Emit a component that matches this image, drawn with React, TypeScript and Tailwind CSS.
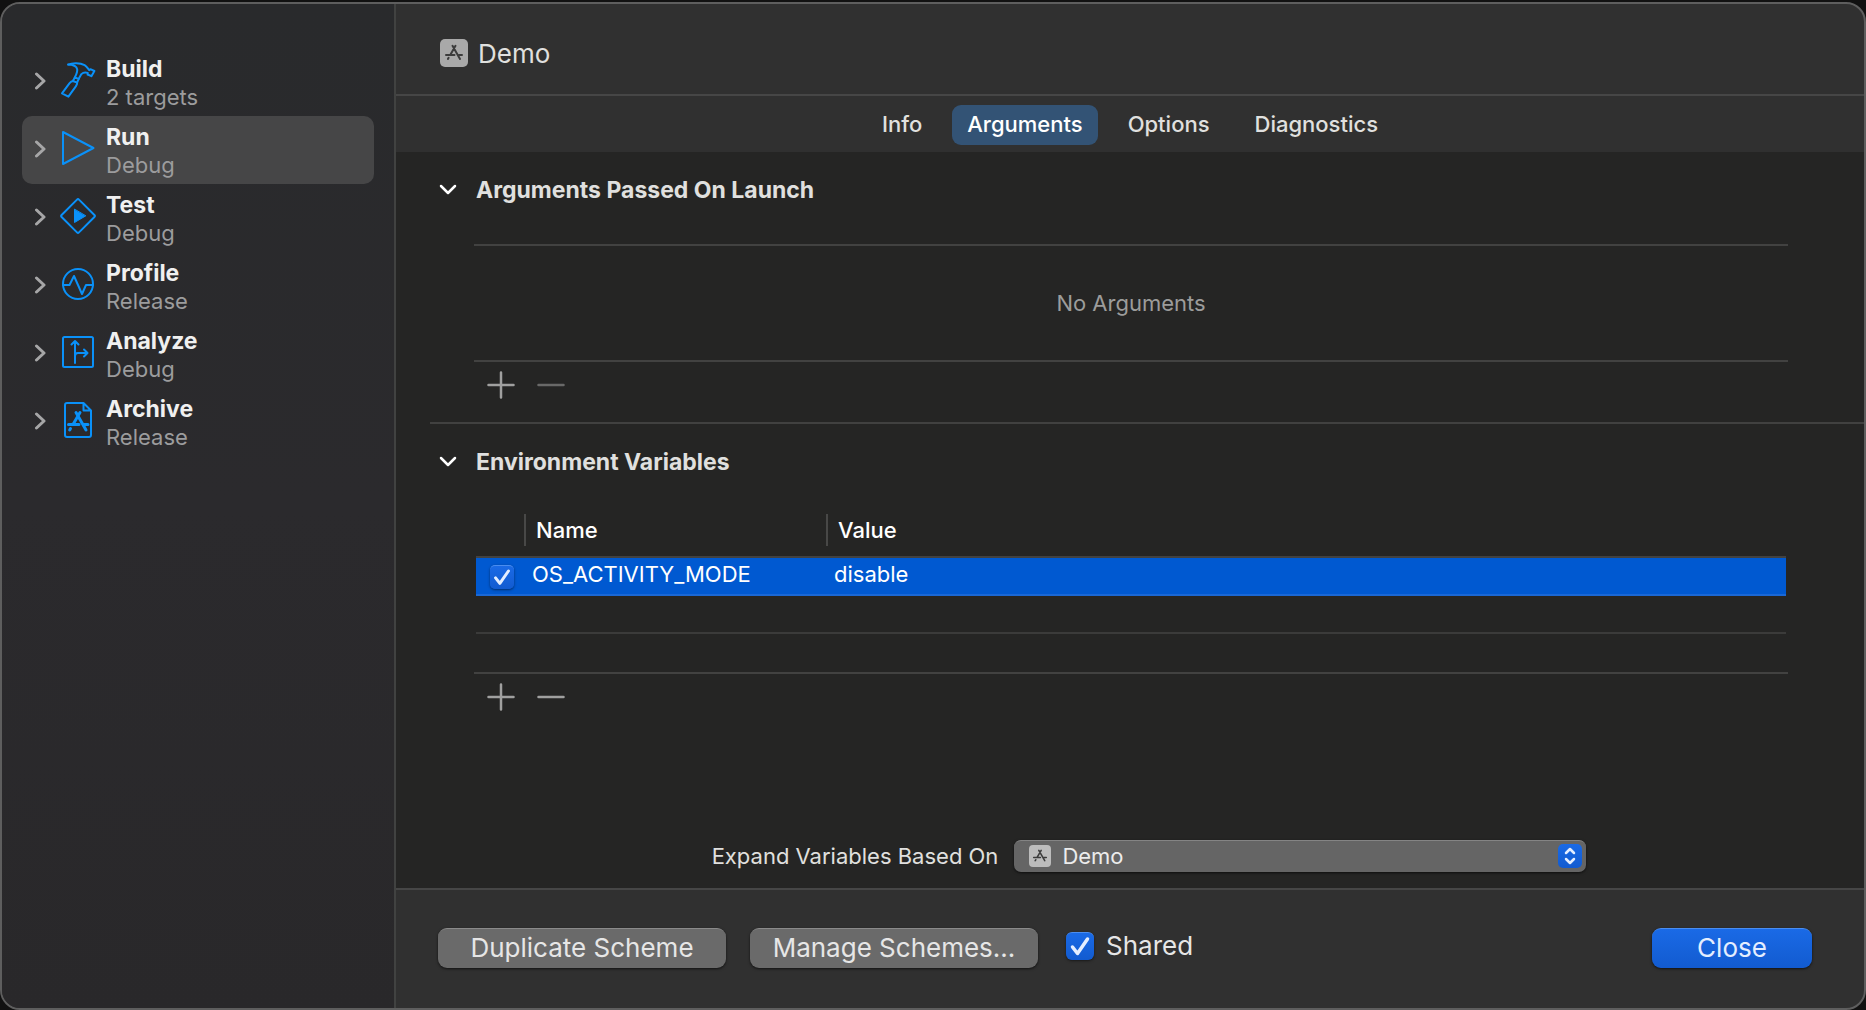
import { useState, type ReactNode } from "react";

const schemes = [
  { name: "Build", detail: "2 targets", icon: <HammerIcon /> },
  { name: "Run", detail: "Debug", icon: <RunIcon /> },
  { name: "Test", detail: "Debug", icon: <TestIcon /> },
  { name: "Profile", detail: "Release", icon: <ProfileIcon /> },
  { name: "Analyze", detail: "Debug", icon: <AnalyzeIcon /> },
  { name: "Archive", detail: "Release", icon: <ArchiveIcon /> },
];

const tabs = ["Info", "Arguments", "Options", "Diagnostics"];

function IconFrame({ children }: { children: ReactNode }) {
  return (
    <svg
      viewBox="0 0 36 36"
      fill="none"
      stroke="currentColor"
      strokeWidth="2"
      strokeLinecap="round"
      strokeLinejoin="round"
      className="mb-1 size-9 shrink-0 text-[#0a91f9]"
      aria-hidden="true"
    >
      {children}
    </svg>
  );
}

function HammerIcon() {
  return (
    <IconFrame>
      <path d="M8 2.6C12.5.6 20 .6 24.6 3.2c2.2 1.3 3.4 3.6 4.6 4.9l1.2-.9 4 1.8-3 5.2-3.8-1.7.2-1.6c-2.4-.9-4.8-.4-6.4 1.2L18.6 17M8 2.6c4.6.2 8.6 1.3 9.2 4.8.4 2.8-1.2 5.6-2.4 8" />
      <path d="M14.8 15.4l3.8 1.6-1.4 3.4c.2 1.4-.4 2.4-1.2 3.8L8.4 34.6 2 31.4l7.6-10.2c1-1.2 1.8-2 3.2-2.2zM12.8 19l4.4 1.6" />
    </IconFrame>
  );
}

function RunIcon() {
  return (
    <IconFrame>
      <path d="M3 2v32L33.5 18z" />
    </IconFrame>
  );
}

function TestIcon() {
  return (
    <IconFrame>
      <path d="M17 1.6q1-1 2 0l15.4 15.4q1 1 0 2L19 34.4q-1 1-2 0L1.6 19q-1-1 0-2z" />
      <path d="M14.5 11.5v13l11-6.5z" fill="currentColor" strokeWidth="1" />
    </IconFrame>
  );
}

function ProfileIcon() {
  return (
    <IconFrame>
      <circle cx="18" cy="18" r="15" />
      <path d="M3 19h6.5l4.5-9 8 18 4-9H33" />
    </IconFrame>
  );
}

function AnalyzeIcon() {
  return (
    <IconFrame>
      <rect x="3" y="3" width="30" height="30" rx="1.5" />
      <path d="M15 29V8M11.5 10.5L15 7l3.5 3.5M15 22q0-3 3-3h9M24 15.5l3.5 3.5-3.5 3.5" />
    </IconFrame>
  );
}

function ArchiveIcon() {
  return (
    <IconFrame>
      <path d="M7 1h16.5L31 8.5V33q0 2-2 2H7q-2 0-2-2V3q0-2 2-2zM23.5 1v7.5H31" />
      <path
        d="M20 10.500l-7 12M10.500 26.500l-.8 1.400M16 10.500l10 17.400M8.500 22.500h10.500M24 22.500h4"
        strokeWidth="3"
      />
    </IconFrame>
  );
}

function AppIcon({ className }: { className: string }) {
  return (
    <svg viewBox="0 0 28 28" fill="currentColor" className={className} aria-hidden="true">
      <rect width="28" height="28" rx="5" />
      <path
        d="M15.5 6.800L10.500 15.500M8.600 18.800l-.7 1.200M12.500 6.800L20 20M6 16h8.500M19 16h3"
        fill="none"
        stroke="#3c3c3c"
        strokeWidth="2"
        strokeLinecap="round"
      />
    </svg>
  );
}

function Disclosure({ open }: { open?: boolean }) {
  return open ? (
    <svg viewBox="0 0 18 12" className="h-3 w-[18px] shrink-0" aria-hidden="true">
      <path d="M2 2l7 7 7-7" fill="none" stroke="#fff" strokeWidth="2.5" strokeLinecap="round" strokeLinejoin="round" />
    </svg>
  ) : (
    <svg viewBox="0 0 12 18" className="mb-0.5 h-[18px] w-3 shrink-0" aria-hidden="true">
      <path d="M2.5 2l7.500 7-7.500 7" fill="none" stroke="#a6a6a7" strokeWidth="3" strokeLinecap="round" strokeLinejoin="round" />
    </svg>
  );
}

function Checkbox({ id, label, className }: { id: string; label?: string; className: string }) {
  return (
    <span className="relative inline-flex shrink-0">
      <input
        id={id}
        type="checkbox"
        defaultChecked
        aria-label={label}
        className={`peer appearance-none border-t border-[#4a8df0] bg-linear-to-b from-[#1a6ae6] to-[#125bd0] shadow-sm shadow-black/40 ${className}`}
      />
      <svg
        viewBox="0 0 28 28"
        className="pointer-events-none absolute inset-0 hidden size-full peer-checked:block"
        aria-hidden="true"
      >
        <path d="M6.5 15l5 6.500L21.500 7" fill="none" stroke="#e4eeff" strokeWidth="3.5" strokeLinecap="round" strokeLinejoin="round" />
      </svg>
    </span>
  );
}

function AddRemove({ canRemove }: { canRemove: boolean }) {
  return (
    <div className="flex h-[46px] items-center gap-[22px] pl-[13px] text-[#a0a09f]">
      <button type="button" aria-label="Add">
        <svg viewBox="0 0 28 28" className="size-7" aria-hidden="true">
          <path d="M14 1.5v25M1.5 14h25" stroke="currentColor" strokeWidth="2.5" strokeLinecap="round" />
        </svg>
      </button>
      <button type="button" aria-label="Remove" disabled={!canRemove} className="disabled:text-[#696968]">
        <svg viewBox="0 0 28 28" className="size-7" aria-hidden="true">
          <path d="M1.5 14h25" stroke="currentColor" strokeWidth="2.5" strokeLinecap="round" />
        </svg>
      </button>
    </div>
  );
}

function SectionTitle({ children }: { children: ReactNode }) {
  return (
    <h2 className="pl-[9px]">
      <button type="button" className="flex items-center gap-[19px] text-[23px] leading-7 font-bold text-[#e0e0df]">
        <Disclosure open />
        {children}
      </button>
    </h2>
  );
}

function Sidebar({ selected, onSelect }: { selected: string; onSelect: (name: string) => void }) {
  return (
    <nav className="w-[394px] shrink-0 border-r-2 border-[#414241] bg-linear-to-b from-[#292a2c] via-[#2b2a2d] to-[#29282a] px-5 pt-11">
      <ul>
        {schemes.map((s) => (
          <li key={s.name}>
            <button
              type="button"
              onClick={() => onSelect(s.name)}
              className={`flex h-[68px] w-full items-center rounded-[10px] pl-3 text-left ${
                s.name === selected ? "bg-[#464647]" : ""
              }`}
            >
              <Disclosure />
              <span className="ml-[14px]">{s.icon}</span>
              <span className="ml-[10px] flex flex-col pt-0.5">
                <span className="text-[23px] leading-7 font-bold text-[#f0f0f0]">{s.name}</span>
                <span className="text-[22px] leading-7 text-[#9c9c9d]">{s.detail}</span>
              </span>
            </button>
          </li>
        ))}
      </ul>
    </nav>
  );
}

function EnvironmentTable() {
  return (
    <div className="mt-7 border-b-2 border-[#424241] px-0.5">
      <table className="w-full table-fixed border-separate border-spacing-0 text-left text-[22px] leading-7 text-white">
        <colgroup>
          <col className="w-12" />
          <col className="w-[302px]" />
          <col />
        </colgroup>
        <thead>
          <tr className="h-[54px]">
            <th className="border-b-2 border-[#424241] p-0" aria-label="Enabled" />
            <th className="border-b-2 border-[#424241] p-0 font-medium">
              <span className="flex h-8 items-center border-l-2 border-[#484847] pl-[10px]">Name</span>
            </th>
            <th className="border-b-2 border-[#424241] p-0 font-medium">
              <span className="flex h-8 items-center border-l-2 border-[#484847] pl-[10px]">Value</span>
            </th>
          </tr>
        </thead>
        <tbody>
          <tr className="h-[38px] bg-[#0059d1]">
            <td className="border-b-2 border-[#1a68d6] p-0 pl-[14px]">
              <span className="flex pt-0.5">
                <Checkbox id="env-enabled" label="Enable OS_ACTIVITY_MODE" className="size-6 rounded-[5px]" />
              </span>
            </td>
            <td className="border-b-2 border-[#1a68d6] p-0 pb-1 pl-2">OS_ACTIVITY_MODE</td>
            <td className="border-b-2 border-[#1a68d6] p-0 pb-1 pl-2">disable</td>
          </tr>
          <tr className="h-[38px]">
            <td colSpan={3} className="border-b-2 border-[#3b3b3a] p-0" />
          </tr>
          <tr className="h-[38px]">
            <td colSpan={3} className="p-0" />
          </tr>
        </tbody>
      </table>
    </div>
  );
}

export default function App() {
  const [selected, setSelected] = useState("Run");
  const [tab, setTab] = useState("Arguments");

  return (
    <div className="flex min-h-screen bg-[#111] pt-0.5 font-['Inter','Liberation_Sans',sans-serif] text-[#e0e0df]">
      <div className="flex flex-1 overflow-hidden rounded-[20px] border-2 border-[#5e5e5e] bg-[#303030]">
        <Sidebar selected={selected} onSelect={setSelected} />

        <div className="flex min-w-0 flex-1 flex-col">
          <header className="flex h-[92px] items-center gap-[10px] border-b-2 border-[#464646] pt-2 pl-11">
            <AppIcon className="size-7 text-[#a9a9a9]" />
            <h1 className="pt-0.5 text-[26px] leading-8">Demo</h1>
          </header>

          <div role="tablist" className="flex h-14 items-center justify-center gap-[15px] pt-0.5">
            {tabs.map((t) => (
              <button
                key={t}
                type="button"
                role="tab"
                aria-selected={t === tab}
                onClick={() => setTab(t)}
                className={`h-10 rounded-[9px] px-[15px] pb-0.5 text-[22px] font-medium ${
                  t === tab ? "bg-[#335375] text-white" : ""
                }`}
              >
                {t}
              </button>
            ))}
          </div>

          <main className="flex flex-1 flex-col bg-[#252524] pl-[34px]">
            <section className="pt-6 pb-[14px]">
              <SectionTitle>Arguments Passed On Launch</SectionTitle>
              <div className="mr-[76px] ml-11">
                <p className="mt-10 flex h-[118px] items-center justify-center border-y-2 border-[#424241] text-[22px] text-[#9c9c9b]">
                  No Arguments
                </p>
                <AddRemove canRemove={false} />
              </div>
            </section>

            <section className="border-t-2 border-[#414140] pt-6">
              <SectionTitle>Environment Variables</SectionTitle>
              <div className="mr-[76px] ml-11">
                <EnvironmentTable />
                <AddRemove canRemove />
              </div>
            </section>

            <div className="mt-auto flex items-center justify-center gap-4 pb-4 pl-1">
              <label htmlFor="expand-on" className="text-[22px] leading-8">
                Expand Variables Based On
              </label>
              <div className="relative w-[572px]">
                <select
                  id="expand-on"
                  className="block h-8 w-full appearance-none rounded-[7px] border-t border-[#848484] bg-[#656565] pb-0.5 pl-12 text-[22px] leading-7 text-[#ececec] shadow-sm shadow-black/50"
                >
                  <option>Demo</option>
                </select>
                <AppIcon className="pointer-events-none absolute top-[5px] left-[15px] size-[22px] text-[#bcbcbc]" />
                <span className="pointer-events-none absolute top-1 right-1 flex size-6 items-center justify-center rounded-[5px] bg-linear-to-b from-[#1a6ae6] to-[#125bd0]">
                  <svg viewBox="0 0 12 18" className="h-[18px] w-3" aria-hidden="true">
                    <path d="M2 6l4-4 4 4M2 12l4 4 4-4" fill="none" stroke="#e4eeff" strokeWidth="2.5" strokeLinecap="round" strokeLinejoin="round" />
                  </svg>
                </span>
              </div>
            </div>
          </main>

          <footer className="flex items-center border-t-2 border-[#464646] pt-[38px] pr-[52px] pb-10 pl-[42px] text-[26px] text-[#e6e6e6]">
            <button type="button" className="h-10 w-72 rounded-[9px] border-t border-[#8a8a8a] bg-[#6a6a6a] pb-0.5 leading-9 shadow-sm shadow-black/50">
              Duplicate Scheme
            </button>
            <button type="button" className="ml-6 h-10 w-72 rounded-[9px] border-t border-[#8a8a8a] bg-[#6a6a6a] pb-0.5 leading-9 shadow-sm shadow-black/50">
              Manage Schemes...
            </button>
            <div className="ml-7 flex items-center gap-3 pb-1">
              <Checkbox id="shared" className="size-7 rounded-[6px]" />
              <label htmlFor="shared" className="leading-9">
                Shared
              </label>
            </div>
            <button type="button" className="ml-auto h-10 w-40 rounded-[9px] border-t border-[#4a8df0] bg-linear-to-b from-[#1a6ae6] to-[#125bd0] pb-0.5 leading-9 text-[#e4eeff] shadow-sm shadow-black/50">
              Close
            </button>
          </footer>
        </div>
      </div>
    </div>
  );
}
